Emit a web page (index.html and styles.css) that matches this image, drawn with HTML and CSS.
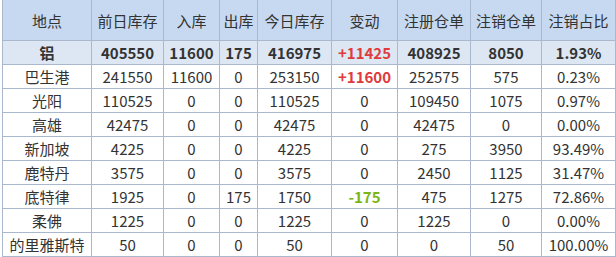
FILE: index.html
```html
<!DOCTYPE html>
<html lang="zh">
<head>
    <meta charset="UTF-8">
    <title>库存</title>
    <link rel="stylesheet" href="styles.css">
</head>
<body>
<div class="wrap">
    <table class="stock">
        <colgroup>
            <col style="width:89px">
            <col style="width:72px">
            <col style="width:56px">
            <col style="width:38px">
            <col style="width:74px">
            <col style="width:66px">
            <col style="width:73px">
            <col style="width:71px">
            <col style="width:74px">
        </colgroup>
        <thead>
            <tr>
                <th>地点</th>
                <th>前日库存</th>
                <th>入库</th>
                <th>出库</th>
                <th>今日库存</th>
                <th>变动</th>
                <th>注册仓单</th>
                <th>注销仓单</th>
                <th>注销占比</th>
            </tr>
        </thead>
        <tbody>
            <tr class="total">
                <td>铝</td><td>405550</td><td>11600</td><td>175</td><td>416975</td>
                <td class="up">+11425</td><td>408925</td><td>8050</td><td>1.93%</td>
            </tr>
            <tr>
                <td>巴生港</td><td>241550</td><td>11600</td><td>0</td><td>253150</td>
                <td class="up">+11600</td><td>252575</td><td>575</td><td>0.23%</td>
            </tr>
            <tr>
                <td>光阳</td><td>110525</td><td>0</td><td>0</td><td>110525</td>
                <td>0</td><td>109450</td><td>1075</td><td>0.97%</td>
            </tr>
            <tr>
                <td>高雄</td><td>42475</td><td>0</td><td>0</td><td>42475</td>
                <td>0</td><td>42475</td><td>0</td><td>0.00%</td>
            </tr>
            <tr>
                <td>新加坡</td><td>4225</td><td>0</td><td>0</td><td>4225</td>
                <td>0</td><td>275</td><td>3950</td><td>93.49%</td>
            </tr>
            <tr>
                <td>鹿特丹</td><td>3575</td><td>0</td><td>0</td><td>3575</td>
                <td>0</td><td>2450</td><td>1125</td><td>31.47%</td>
            </tr>
            <tr>
                <td>底特律</td><td>1925</td><td>0</td><td>175</td><td>1750</td>
                <td class="down">-175</td><td>475</td><td>1275</td><td>72.86%</td>
            </tr>
            <tr>
                <td>柔佛</td><td>1225</td><td>0</td><td>0</td><td>1225</td>
                <td>0</td><td>1225</td><td>0</td><td>0.00%</td>
            </tr>
            <tr>
                <td>的里雅斯特</td><td>50</td><td>0</td><td>0</td><td>50</td>
                <td>0</td><td>0</td><td>50</td><td>100.00%</td>
            </tr>
        </tbody>
    </table>
</div>
</body>
</html>
```

FILE: styles.css
```css
body {
    margin: 0;
    background: #ffffff;
    font-family: "Noto Sans CJK SC", "Noto Sans", sans-serif;
    color: #333333;
}
.wrap {
    padding-left: 2px;
    overflow: hidden;
    height: 257px;
}
.stock {
    border-collapse: collapse;
    table-layout: fixed;
    width: 614px;
    font-size: 15px;
    margin-top: -1px;
}
.stock th, .stock td {
    border: 1px solid #a9b8cc;
    text-align: center;
    padding: 0;
    white-space: nowrap;
    overflow: hidden;
}
.stock th {
    font-weight: normal;
    background: #c6d9f0;
    height: 40px;
}
.stock td {
    height: 23px;
}
.total td {
    background: #dde7f3;
    font-weight: bold;
}
.up {
    color: #e03a3a;
    font-weight: bold;
}
.down {
    color: #7cb518;
    font-weight: bold;
}
```
